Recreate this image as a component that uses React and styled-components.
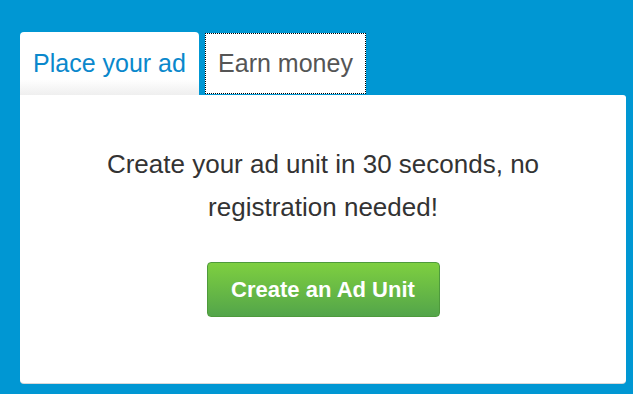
import React, { useState } from 'react'
import styled, { createGlobalStyle } from 'styled-components'

const GlobalStyle = createGlobalStyle`
  html, body {
    margin: 0;
    padding: 0;
    background: #0097d3;
    font-family: "Liberation Sans", Arial, sans-serif;
  }
`;

const Page = styled.div`
  width: 633px;
  height: 394px;
  padding: 32px 7px 0 20px;
  box-sizing: border-box;
  overflow: hidden;
`;

const TabBar = styled.div`
  display: flex;
  align-items: flex-start;
  gap: 6px;
  height: 63px;
`;

const Tab = styled.button`
  font-family: inherit;
  font-size: 25px;
  border: none;
  cursor: pointer;
  width: ${p => p.$width}px;
  background: ${p => (p.$active ? 'linear-gradient(to bottom, #ffffff 0%, #ffffff 75%, #efefef 100%)' : '#ffffff')};
  color: ${p => (p.$active ? '#0a88cc' : '#555555')};
  border-radius: ${p => (p.$active ? '4px 4px 0 0' : '0')};
  height: ${p => (p.$active ? '63px' : '61px')};
  margin-top: ${p => (p.$active ? '0' : '1px')};
  padding: 0;
  text-align: center;
  white-space: nowrap;
  outline: ${p => (p.$focused ? '1px dotted #000' : 'none')};
  outline-offset: -1px;
`;

const Panel = styled.div`
  background: #ffffff;
  height: 288px;
  border-radius: 0 3px 4px 4px;
  box-shadow: 0 1px 0 #d8d8d8;
  display: flex;
  flex-direction: column;
  align-items: center;
  padding-top: 48px;
  box-sizing: border-box;
`;

const Lead = styled.p`
  margin: 0;
  width: 480px;
  text-align: center;
  font-size: 26px;
  line-height: 43px;
  color: #333333;
`;

const CreateButton = styled.button`
  margin-top: 33px;
  width: 233px;
  height: 55px;
  border: 1px solid #4e9a3c;
  border-radius: 4px;
  background: linear-gradient(to bottom, #7ecf40 0%, #53a54a 100%);
  color: #ffffff;
  font-family: inherit;
  font-weight: bold;
  font-size: 22px;
  cursor: pointer;
`;

export default function App() {
  const [tab, setTab] = useState(0)
  return (
    <Page>
      <GlobalStyle />
      <TabBar>
        <Tab $width={179} $active={tab === 0} onClick={() => setTab(0)}>Place your ad</Tab>
        <Tab $width={161} $active={tab === 1} $focused onClick={() => setTab(1)}>Earn money</Tab>
      </TabBar>
      <Panel>
        <Lead>Create your ad unit in 30 seconds, no registration needed!</Lead>
        <CreateButton>Create an Ad Unit</CreateButton>
      </Panel>
    </Page>
  )
}
